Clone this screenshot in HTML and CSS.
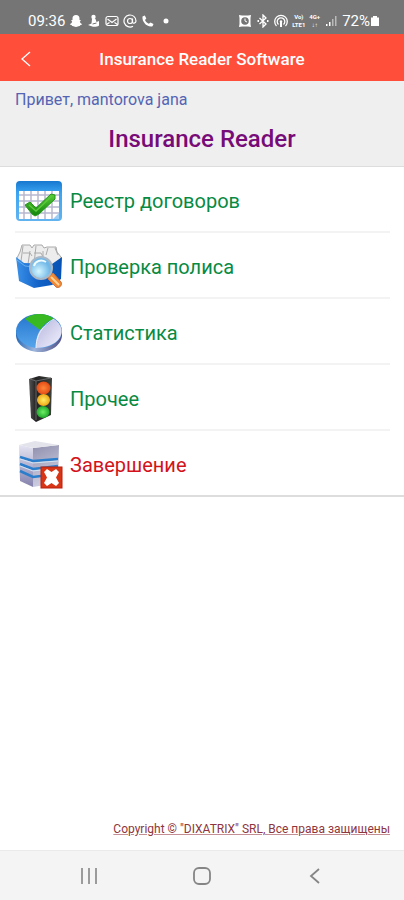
FILE: index.html
```html
<!DOCTYPE html>
<html lang="ru">
<head>
    <meta charset="UTF-8">
    <meta name="viewport" content="width=device-width, initial-scale=1.0">
    <title>Insurance Reader Software</title>
    <link rel="stylesheet" href="styles.css">
</head>
<body>
    <div class="status-bar">
        <div class="status-group">
            <span class="clock">09:36</span>
            <svg width="14" height="14" viewBox="0 0 14 14" fill="#fff"><path d="M7 1c2.300 0 3.500 1.500 3.500 3.500v1.500l1.500.3-1.200 1.400c.5 1.200 1.200 1.800 2.400 2.300-.3 1-1.200.9-2 1.200l-.4.900c-1.500-.2-2.100.900-3.800.9s-2.300-1.100-3.800-.9l-.4-.9c-.8-.3-1.700-.2-2-1.200C2 9.500 2.700 8.900 3.200 7.700L2 6.300l1.500-.3V4.500C3.500 2.500 4.700 1 7 1z"/></svg>
            <svg width="14" height="14" viewBox="0 0 14 14" fill="#fff"><circle cx="6.500" cy="3" r="2.200"/><path d="M5 5h3.500l1 3 2.500-1v4.500c-1.500 1.300-4 1.500-6 1.300L1 11l3.500-1.500z"/><path d="M5.500 10l4-1" stroke="#757575"/></svg>
            <svg width="14" height="14" viewBox="0 0 14 14" fill="none" stroke="#fff" stroke-width="1.200"><rect x="1" y="2.500" width="12" height="9" rx="2"/><path d="M2.500 5L7 8.500 11.500 5M1.500 10.500l3-2M12.500 10.500l-3-2"/></svg>
            <svg width="14" height="14" viewBox="0 0 14 14" fill="none" stroke="#fff" stroke-width="1.200"><circle cx="7" cy="7" r="2.500"/><path d="M9.500 4.500v3.500c0 2 3.500 1.500 3.500-1a6 6 0 1 0-3 5.200"/></svg>
            <svg width="14" height="14" viewBox="0 0 14 14" fill="#fff"><path d="M1.500 2.500L3.800 1.500l1.500 3-1.300 1.500c.7 1.700 2 3 3.800 3.800L9.500 8.500l3 1.500-1 2.300C6 13.500.8 8 1.500 2.500z"/></svg>
            <svg width="14" height="14" viewBox="0 0 14 14" fill="#fff"><circle cx="7" cy="7" r="2.500"/></svg>
        </div>
        <div class="status-group">
            <svg width="14" height="14" viewBox="0 0 14 14" fill="#fff"><path d="M1 1l3 .5h6l3-.5-.5 3v6l.5 3-3-.5H4L1 13l.5-3V4z"/><circle cx="7" cy="7" r="3.800" fill="#757575"/><path d="M7 4.500V7l2 1" fill="none" stroke="#fff"/></svg>
            <svg width="14" height="14" viewBox="0 0 14 14" fill="none" stroke="#fff" stroke-width="1.300"><path d="M3.500 4l6.500 6-3 3V1l3 3-6.500 6"/><path d="M1.500 7h1.500M11 7h1.500" stroke-width="2"/></svg>
            <svg width="14" height="14" viewBox="0 0 14 14" fill="none" stroke="#fff" stroke-width="1.300"><path d="M2.500 12a6.300 6.300 0 1 1 9 0M4.500 10.500a3.800 3.800 0 1 1 5 0"/><circle cx="7" cy="7.500" r="1.200" fill="#fff" stroke="none"/><path d="M7 8v5" stroke-width="2"/></svg>
            <span class="network"><span>Vo)</span><span>LTE1</span></span>
            <span class="network"><span>4G+</span><span>↓↑</span></span>
            <svg width="14" height="14" viewBox="0 0 14 14" fill="#fff"><path d="M2 10h1.500v2H2zM5 8h1.500v4H5z"/><path d="M8 5h1.500v7H8zM11 2h1.500v10H11z" opacity=".5"/></svg>
            <span class="battery">72%<svg width="10" height="14" viewBox="0 0 10 14" fill="#fff"><path d="M3 2h4v1.500h2V12H1V3.500h2z"/></svg></span>
        </div>
    </div>

    <header class="toolbar">
        <button class="back" type="button" aria-label="Назад">
            <svg width="10" height="16" viewBox="0 0 10 16" fill="none" stroke="#fff" stroke-width="1.300"><path d="M9 1L1 8l8 7"/></svg>
        </button>
        <h1>Insurance Reader Software</h1>
    </header>

    <section class="intro">
        <p>Привет, mantorova jana</p>
        <h2>Insurance Reader</h2>
    </section>

    <nav class="menu">
        <a class="menu-item" href="#">
            <svg width="48" height="48" viewBox="0 0 48 48">
                <defs>
                    <linearGradient id="calendar" x2="0" y2="1"><stop stop-color="#1677cf"/><stop offset=".3" stop-color="#3ba5f1"/><stop offset="1" stop-color="#62b4ef"/></linearGradient>
                    <linearGradient id="tick" x2="0" y2="1"><stop stop-color="#59ce35"/><stop offset="1" stop-color="#11820d"/></linearGradient>
                </defs>
                <rect x="1" y="4" width="46" height="40" rx="4" fill="url(#calendar)"/>
                <path d="M4 14h40v24l-4 4H4z" fill="#fff"/>
                <path d="M4 18h40M4 24h40M4 30h40M4 36h40M9 14v28M16 14v28M23 14v28M30 14v28M37 14v28" stroke="#b7b8ce" stroke-width="1.500"/>
                <path d="M38 42l6-6v6z" fill="#9ccdf4"/>
                <path d="M10 28l5-3 6 6 15-14 4 1v4L24 37l-4 2-3-2z" fill="url(#tick)" stroke="#27961b"/>
                <path d="M14 28l7 6 16-15" fill="none" stroke="#5cc83c" stroke-width="1.500"/>
            </svg>
            Реестр договоров
        </a>
        <a class="menu-item" href="#">
            <svg width="48" height="48" viewBox="0 0 48 48">
                <defs>
                    <linearGradient id="box"><stop stop-color="#3b92e9"/><stop offset=".5" stop-color="#1261c7"/><stop offset="1" stop-color="#0652b4"/></linearGradient>
                    <radialGradient id="lens" cx=".4" cy=".65"><stop stop-color="#d5f6ff"/><stop offset="1" stop-color="#70b8e8"/></radialGradient>
                </defs>
                <path d="M5 9l2-7h8l2 3 2-3h8l2 3 3-1h9l1 5 4 5-2 15H4L2 15z" fill="#ededed" stroke="#aaa"/>
                <path d="M8 3l-2 15M15 8l-2 13M21 3l-2 18M28 8v12M8 10h7l2 3M19 10h7l2 4M33 5l-2 7M40 5l3 7" fill="none" stroke="#aaa"/>
                <path d="M1 14l8 6 28 1 10-7-1 22-9 6-18 3-15-7z" fill="url(#box)"/>
                <path d="M2 17l8 6 10 1" fill="none" stroke="#67afef"/>
                <path d="M34 33l4-3 8 9c2 3-2 7-5 5l-8-8z" fill="#f18a32" stroke="#cb7144"/>
                <path d="M36 34l8 8" stroke="#ffd29b" stroke-width="2"/>
                <circle cx="26" cy="25" r="11" fill="url(#lens)" stroke="#a9b8c7" stroke-width="2"/>
                <path d="M19 23c1-5 7-7 12-4" fill="none" stroke="#effcff" stroke-width="2"/>
            </svg>
            Проверка полиса
        </a>
        <a class="menu-item" href="#">
            <svg width="48" height="48" viewBox="0 0 48 48">
                <defs>
                    <linearGradient id="pie-side"><stop stop-color="#2869b5"/><stop offset=".4" stop-color="#9db5dc"/><stop offset="1" stop-color="#515086"/></linearGradient>
                    <linearGradient id="pie-blue" x2="0" y2="1"><stop stop-color="#2475ce"/><stop offset="1" stop-color="#56a5ec"/></linearGradient>
                    <linearGradient id="pie-white" x2="1" y2="1"><stop stop-color="#b4b5dc"/><stop offset="1" stop-color="#f2f1ff"/></linearGradient>
                </defs>
                <path d="M1 21v5c0 10 11 17 24 17 12 0 22-8 22-17v-5z" fill="url(#pie-side)"/>
                <ellipse cx="24" cy="22" rx="23" ry="17" fill="url(#pie-blue)"/>
                <path d="M26 20L39 10c14 9 9 28-18 29 0-8 1-14 5-19z" fill="url(#pie-white)"/>
                <path d="M10 10c7-6 21-7 29 0-6 2-10 5-14 11z" fill="#38b921"/>
                <path d="M21 39c0-8 3-21 18-29" fill="none" stroke="#edf1fb"/>
            </svg>
            Статистика
        </a>
        <a class="menu-item" href="#">
            <svg width="48" height="48" viewBox="0 0 48 48">
                <defs>
                    <linearGradient id="housing"><stop stop-color="#555"/><stop offset=".3" stop-color="#222"/><stop offset="1" stop-color="#3b403b"/></linearGradient>
                    <radialGradient id="red-light"><stop stop-color="#ff873a"/><stop offset="1" stop-color="#e44a14"/></radialGradient>
                    <radialGradient id="yellow-light"><stop stop-color="#ffee65"/><stop offset="1" stop-color="#eea715"/></radialGradient>
                    <radialGradient id="green-light"><stop stop-color="#70ef65"/><stop offset="1" stop-color="#20a82d"/></radialGradient>
                </defs>
                <path d="M14 4l10-3 13 2-1 37-15 7-5-4z" fill="url(#housing)"/>
                <path d="M15 4l6 2 15-3M21 6v39" fill="none" stroke="#666"/>
                <ellipse cx="28.500" cy="13" rx="7" ry="6.500" fill="url(#red-light)"/>
                <ellipse cx="28.500" cy="25" rx="6.500" ry="6" fill="url(#yellow-light)"/>
                <ellipse cx="28" cy="37" rx="6.500" ry="6" fill="url(#green-light)"/>
            </svg>
            Прочее
        </a>
        <a class="menu-item exit" href="#">
            <svg width="48" height="48" viewBox="0 0 48 48">
                <defs>
                    <linearGradient id="server-front" x2=".3" y2="1"><stop stop-color="#8f8fad"/><stop offset="1" stop-color="#d0d0e4"/></linearGradient>
                    <linearGradient id="server-side" x2="0" y2="1"><stop stop-color="#e4e4f2"/><stop offset="1" stop-color="#8380ac"/></linearGradient>
                </defs>
                <path d="M4 4l14 3v39L5 40z" fill="url(#server-side)"/>
                <path d="M18 7l26-3-1 38-25 4z" fill="url(#server-front)"/>
                <path d="M4 4l16-4 24 4-26 3z" fill="#e3e3ec"/>
                <path d="M5 16l13 4 25-2M5 23l13 5 25-3M5 30l13 6 16-2" fill="none" stroke="#2b7ecb" stroke-width="2.500"/>
                <path d="M5 18l13 4 25-2M5 25l13 5 25-3" fill="none" stroke="#d1e3f4"/>
                <rect x="26" y="26" width="21" height="21" fill="#d83416" stroke="#b81e0c"/>
                <path d="M29 31l3-3 4.500 3 4.500-3 3 3-3 5.500 3 5.500-3 3-4.500-3-4.500 3-3-3 3-5.500z" fill="#fff"/>
            </svg>
            Завершение
        </a>
    </nav>

    <footer class="copyright"><a href="#">Copyright © "DIXATRIX" SRL, Все права защищены</a></footer>

    <div class="nav-bar">
        <button type="button" aria-label="Последние">
            <svg width="20" height="20" viewBox="0 0 20 20" stroke="#858585" stroke-width="1.600"><path d="M3 2v16M10 2v16M17 2v16"/></svg>
        </button>
        <button type="button" aria-label="Домой">
            <svg width="20" height="20" viewBox="0 0 20 20" fill="none" stroke="#858585" stroke-width="1.800"><rect x="2" y="2" width="16" height="16" rx="5"/></svg>
        </button>
        <button type="button" aria-label="Назад">
            <svg width="20" height="20" viewBox="0 0 20 20" fill="none" stroke="#858585" stroke-width="1.800"><path d="M14 3l-8 7 8 7"/></svg>
        </button>
    </div>
</body>
</html>
```
FILE: styles.css
```css
* {
    box-sizing: border-box;
}

body {
    display: flex;
    flex-direction: column;
    min-height: 100vh;
    margin: 0;
    font-family: Roboto, "Noto Sans", sans-serif;
    background-color: #fff;
}

h1, h2, p {
    margin: 0;
}

button {
    display: flex;
    align-items: center;
    justify-content: center;
    padding: 0;
    border: none;
    background: none;
    cursor: pointer;
}

.status-bar {
    display: flex;
    justify-content: space-between;
    padding: 8px 24px 0 28px;
    height: 34px;
    background-color: #757575;
    color: #fff;
}

.status-group {
    display: flex;
    align-items: center;
    gap: 4px;
}

.clock, .battery {
    font-size: 15px;
    line-height: 16px;
}

.network {
    display: flex;
    flex-direction: column;
    font-size: 6px;
    font-weight: bold;
    line-height: 8px;
    text-align: center;
}

.battery {
    display: flex;
    align-items: center;
}

.toolbar {
    display: grid;
    grid-template-columns: 52px 1fr 52px;
    align-items: center;
    height: 47px;
    padding-top: 2px;
    background-color: #ff4f3b;
    color: #fff;
}

.back {
    height: 45px;
}

.toolbar h1 {
    font-size: 17px;
    font-weight: 500;
    line-height: 24px;
    text-align: center;
}

.intro {
    padding: 9px 15px 10px;
    border-bottom: 1px solid #ddd;
    background-color: #efefef;
}

.intro p {
    font-size: 16px;
    line-height: 20px;
    color: #5464b4;
}

.intro h2 {
    margin-top: 13px;
    font-size: 24px;
    font-weight: 500;
    line-height: 33px;
    text-align: center;
    color: #770b77;
}

.menu {
    padding: 0 14px 0 15px;
    border-bottom: 2px solid #ddd;
}

.menu-item {
    display: flex;
    align-items: center;
    gap: 7px;
    height: 66px;
    padding-top: 3px;
    border-bottom: 2px solid #f3f3f3;
    font-size: 20px;
    color: #078a42;
    text-decoration: none;
}

.menu-item:last-child {
    height: 64px;
    border-bottom: none;
}

.exit {
    color: #d3131b;
}

.copyright {
    margin-top: auto;
    padding: 0 14px 13px;
    font-size: 12px;
    line-height: 16px;
    text-align: right;
}

.copyright a {
    color: #8e353d;
    text-decoration-color: #c48f94;
}

.nav-bar {
    display: flex;
    justify-content: center;
    gap: 37px;
    height: 50px;
    background-color: #f4f4f4;
    border-top: 1px solid #eaeaea;
}

.nav-bar button {
    width: 76px;
}
```
